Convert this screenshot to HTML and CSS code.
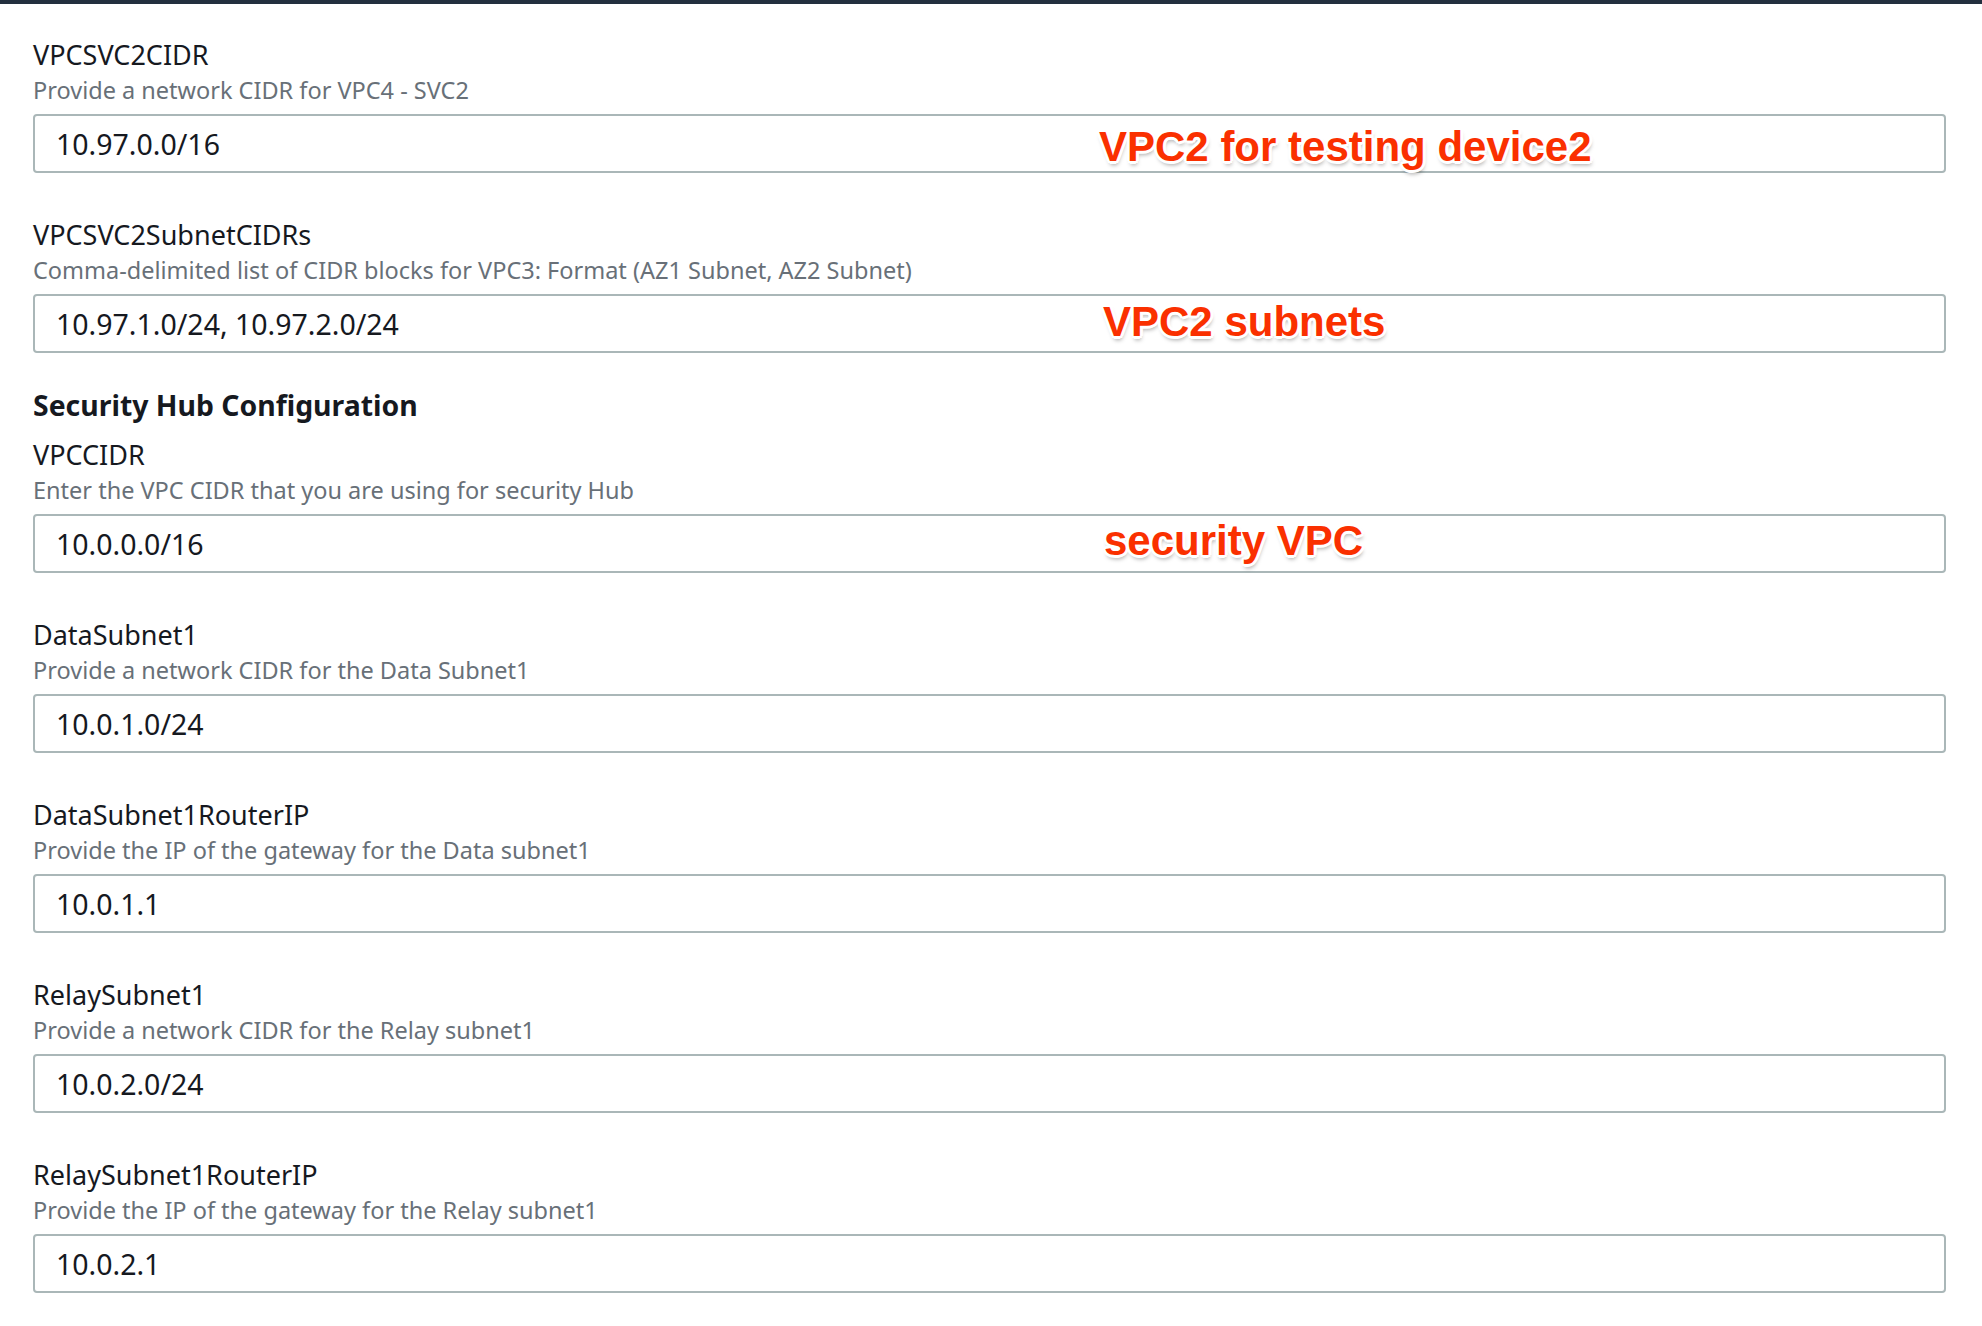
FILE: index.html
```html
<!DOCTYPE html>
<html lang="en">
<head>
<meta charset="utf-8">
<title>Parameters</title>
<link rel="stylesheet" href="styles.css">
</head>
<body>
<div class="topbar"></div>
<main class="form">
  <div class="group">
    <div class="field">
      <div class="label">VPCSVC2CIDR</div>
      <div class="desc">Provide a network CIDR for VPC4 - SVC2</div>
      <div class="box">10.97.0.0/16<span class="note note-1">VPC2 for testing device2</span></div>
    </div>
    <div class="field">
      <div class="label">VPCSVC2SubnetCIDRs</div>
      <div class="desc">Comma-delimited list of CIDR blocks for VPC3: Format (AZ1 Subnet, AZ2 Subnet)</div>
      <div class="box">10.97.1.0/24, 10.97.2.0/24<span class="note note-2">VPC2 subnets</span></div>
    </div>
  </div>
  <h2 class="section-title">Security Hub Configuration</h2>
  <div class="group">
    <div class="field">
      <div class="label">VPCCIDR</div>
      <div class="desc">Enter the VPC CIDR that you are using for security Hub</div>
      <div class="box">10.0.0.0/16<span class="note note-3">security VPC</span></div>
    </div>
    <div class="field">
      <div class="label">DataSubnet1</div>
      <div class="desc">Provide a network CIDR for the Data Subnet1</div>
      <div class="box">10.0.1.0/24</div>
    </div>
    <div class="field">
      <div class="label">DataSubnet1RouterIP</div>
      <div class="desc">Provide the IP of the gateway for the Data subnet1</div>
      <div class="box">10.0.1.1</div>
    </div>
    <div class="field">
      <div class="label">RelaySubnet1</div>
      <div class="desc">Provide a network CIDR for the Relay subnet1</div>
      <div class="box">10.0.2.0/24</div>
    </div>
    <div class="field">
      <div class="label">RelaySubnet1RouterIP</div>
      <div class="desc">Provide the IP of the gateway for the Relay subnet1</div>
      <div class="box">10.0.2.1</div>
    </div>
  </div>
</main>
</body>
</html>
```
FILE: styles.css
```css
html, body {
  margin: 0;
  padding: 0;
  background: #ffffff;
}
body {
  font-family: "Noto Sans", "Open Sans", sans-serif;
  color: #16191f;
}
.topbar {
  height: 4px;
  background: #232f3e;
}
.form {
  padding: 34px 36px 0 33px;
  display: flex;
  flex-direction: column;
}
.group {
  display: flex;
  flex-direction: column;
  gap: 45px;
}
.field {
  display: flex;
  flex-direction: column;
}
.label {
  font-size: 27px;
  line-height: 34px;
  height: 34px;
  white-space: nowrap;
}
.desc {
  font-size: 23.5px;
  line-height: 36px;
  height: 36px;
  color: #687078;
  white-space: nowrap;
}
.box {
  position: relative;
  margin-top: 6px;
  height: 55px;
  border: 2px solid #aab7b8;
  border-radius: 4px;
  padding-left: 21px;
  display: flex;
  align-items: center;
  font-size: 28.5px;
  color: #16191f;
  white-space: nowrap;
}
.section-title {
  margin: 34px 0 15px 0;
  font-size: 28.4px;
  line-height: 36px;
  height: 36px;
  font-weight: 700;
}
.note {
  position: absolute;
  left: 1064px;
  top: 50%;
  transform: translateY(-50%);
  font-family: "Liberation Sans", Arial, sans-serif;
  font-weight: 700;
  font-size: 42px;
  line-height: 1;
  color: #fa3000;
  text-shadow:
    -2px -2px 0 #fff, 2px -2px 0 #fff, -2px 2px 0 #fff, 2px 2px 0 #fff,
    0 -3px 0 #fff, 0 3px 0 #fff, -3px 0 0 #fff, 3px 0 0 #fff,
    1px 4px 4px rgba(0, 0, 0, 0.35);
}
.note-1 {
  margin-top: 3px;
}
.note-2 {
  left: 1068px;
  margin-top: -2px;
}
.note-3 {
  left: 1069px;
  margin-top: -3px;
}
```
